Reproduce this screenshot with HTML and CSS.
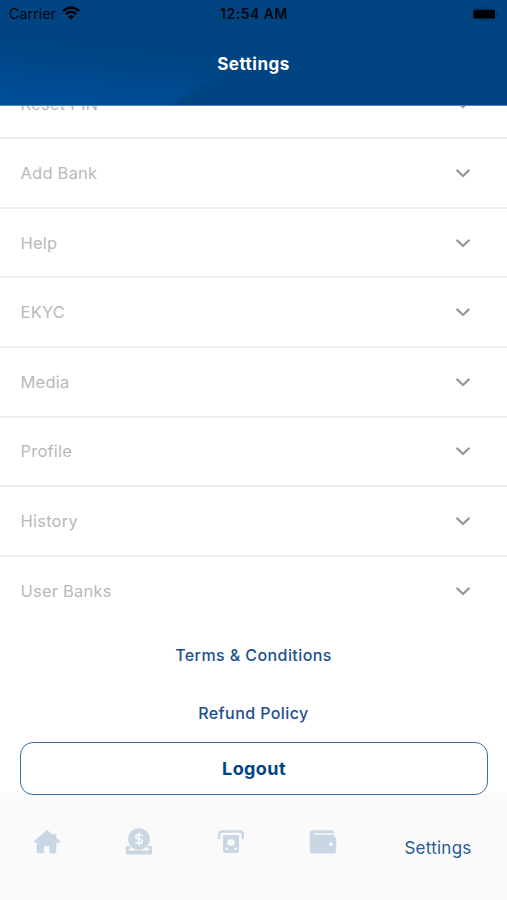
FILE: index.html
```html
<!DOCTYPE html>
<html lang="en">
<head>
<meta charset="utf-8">
<title>Settings</title>
<link rel="stylesheet" href="styles.css">
</head>
<body>
<svg width="0" height="0" class="defs"><symbol id="chev" viewBox="0 0 16 10"><path d="M1.6 1.8 8 8l6.4-6.2" fill="none" stroke="#999" stroke-width="2.3"/></symbol></svg>
<div class="screen">
  <header class="header">
    <svg class="glow" viewBox="0 0 507 106" preserveAspectRatio="none">
      <defs>
        <linearGradient id="g" gradientUnits="userSpaceOnUse" x1="90" y1="108" x2="96" y2="45"><stop offset="0" stop-color="#004d98"/><stop offset="1" stop-color="#004481"/></linearGradient>
      </defs>
      <path d="M0 0H340Q230 72 170 106H0Z" fill="url(#g)"/>
    </svg>
    <div class="status">
      <div class="carrier"><span>Carrier</span>
        <svg width="18" height="14" viewBox="0 0 18 14" fill="none" stroke="#000" stroke-width="2.4"><path d="M1 5.1Q9-2.2 17 5.1"/><path d="M3.8 8.2Q9 3.4 14.2 8.2"/><path d="M9 13.6 5.9 10.5Q9 8 12.1 10.5Z" fill="#000" stroke="none"/></svg>
      </div>
      <span class="time">12:54 AM</span>
      <svg class="battery" width="28" height="14" viewBox="0 0 28 14"><rect x="1" y="1" width="24.5" height="12" rx="3.5" fill="none" stroke="#00376c"/><rect x="2.5" y="2.7" width="21.5" height="8.8" rx="1.5" fill="#000"/><path d="M26.5 5v4q1-.5 1-2t-1-2" fill="#00376c"/></svg>
    </div>
    <h1>Settings</h1>
  </header>
  <main class="content">
    <div class="list">
      <div class="row"><span>Reset PIN</span><svg class="chev"><use href="#chev"/></svg></div>
      <div class="row"><span>Add Bank</span><svg class="chev"><use href="#chev"/></svg></div>
      <div class="row"><span>Help</span><svg class="chev"><use href="#chev"/></svg></div>
      <div class="row"><span>EKYC</span><svg class="chev"><use href="#chev"/></svg></div>
      <div class="row"><span>Media</span><svg class="chev"><use href="#chev"/></svg></div>
      <div class="row"><span>Profile</span><svg class="chev"><use href="#chev"/></svg></div>
      <div class="row"><span>History</span><svg class="chev"><use href="#chev"/></svg></div>
      <div class="row"><span>User Banks</span><svg class="chev"><use href="#chev"/></svg></div>
    </div>
    <a class="link terms">Terms &amp; Conditions</a>
    <a class="link refund">Refund Policy</a>
  </main>
  <button class="logout">Logout</button>
  <nav class="tabs">
    <div class="tab"><svg width="28" height="28" viewBox="0 0 28 28"><path d="M14 2.2 1 13.4l.9 1.2H4V24q0 1 1 1h5.8v-7.2h5.9V25H22q1 0 1-1v-9.4h3.1l.9-1.2-4-3.5V6.3h-2.6v1.3Z" fill="#c9d6e3" stroke="#c9d6e3" stroke-width=".5" stroke-linejoin="round"/></svg></div>
    <div class="tab"><svg width="28" height="28" viewBox="0 0 28 28"><path d="M5.5 19.3H2.3v5.7h23.4v-5.7h-3.2" fill="none" stroke="#c9d6e3" stroke-width="2.8" stroke-linejoin="round"/><path d="M3 24.2h22" stroke="#c9d6e3" stroke-width="3.6"/><path d="M5.5 21h17" stroke="#fafafa" stroke-width="1.5"/><circle cx="14" cy="11" r="10.8" fill="#c9d6e3"/><path d="M17.3 8.2q-.8-1.5-3.3-1.5-3.1 0-3.1 2.1t3.1 2.2q3.3.2 3.3 2.3 0 2.2-3.3 2.2-2.6 0-3.5-1.7M14 4.8v12.6" fill="none" stroke="#fafafa" stroke-width="1.7"/></svg></div>
    <div class="tab"><svg width="28" height="28" viewBox="0 0 28 28"><path d="M2.2 10V6.5q0-3 3-3h17.6q3 0 3 3V10" fill="none" stroke="#c9d6e3" stroke-width="2.4" stroke-linecap="round"/><path d="M6 7h16v15.5q0 2.5-2.5 2.5h-11Q6 25 6 22.5Z" fill="#c9d6e3"/><path d="M10 14.5q0-3 4-3.2 4-.1 4 3.5 0 3.3-4 3-4-.1-4-3.3Z" fill="#fafafa"/><circle cx="9.5" cy="20.7" r="1.3" fill="#fafafa"/><circle cx="18.5" cy="20.7" r="1.3" fill="#fafafa"/></svg></div>
    <div class="tab"><svg width="28" height="28" viewBox="0 0 28 28"><path d="M3.5 2.2H23q2.2 0 2.2 2.2v4q2 .6 2 2.7v11.5q0 3-3 3H3.8q-3 0-3-3V4.9q0-2.7 2.7-2.7Z" fill="#c9d6e3"/><path d="M4.5 6H25.5" stroke="#f3f6f8" stroke-width="1.6"/><circle cx="22" cy="16.2" r="1.8" fill="#fafafa"/></svg></div>
    <div class="tab active">Settings</div>
  </nav>
</div>
</body>
</html>
```
FILE: styles.css
```css
* { box-sizing: border-box; }
body { margin: 0; font-family: Inter, "Liberation Sans", sans-serif; background: #fff; }
.defs { position: absolute; }
.screen { width: 507px; height: 900px; overflow: hidden; display: flex; flex-direction: column; }
.header { position: relative; flex: none; height: 106px; background: #004481; border-bottom: 1px solid #5584b4; }
.glow { position: absolute; inset: 0; width: 100%; height: 100%; }
.status { position: relative; display: grid; grid-template-columns: 1fr auto 1fr; align-items: center; height: 28px; padding: 0 8px 0 9px; font-size: 14px; line-height: 28px; color: #000510; }
.carrier { display: flex; align-items: center; gap: 6px; letter-spacing: 0.2px; }
.carrier svg { margin-top: -2px; }
.time { font-weight: 600; letter-spacing: 0.5px; }
.battery { justify-self: end; margin-top: -1px; }
h1 { position: relative; margin: 24px 0 0; font-size: 17px; line-height: 24px; font-weight: 700; color: #fff; text-align: center; letter-spacing: 0.5px; }
.content { flex: none; height: 636px; overflow: hidden; display: flex; flex-direction: column; }
.list { flex: none; margin-top: -36.3px; }
.row { height: 69.6px; display: flex; align-items: center; justify-content: space-between; padding: 0 36px 0 20.5px; border-bottom: 2px solid #ededed; font-size: 16.5px; letter-spacing: 0.22px; color: #b9b9b9; }
.row:last-child { border-color: transparent; }
.chev { width: 16px; height: 10px; }
.link { display: block; text-align: center; font-size: 16px; line-height: 24px; font-weight: 500; letter-spacing: 0.42px; color: #1c508d; }
.terms { margin-top: 16.6px; }
.refund { margin-top: 34px; }
.logout { flex: none; position: relative; z-index: 1; height: 53px; margin: 0 19px 0 20px; padding: 0; border: 1.5px solid #3d6da3; border-radius: 13px; background: #fff; font: 700 18px Inter, sans-serif; letter-spacing: 0.4px; color: #004481; }
.tabs { flex: 1; margin-top: -2px; background: #fafafa; display: grid; grid-template-columns: repeat(4, 92px) 1fr; padding: 35px 0 0 1px; align-items: start; }
.tab { display: flex; justify-content: center; }
.active { font-size: 17px; line-height: 24px; padding-top: 8px; letter-spacing: 0.25px; color: #275b94; }
```
